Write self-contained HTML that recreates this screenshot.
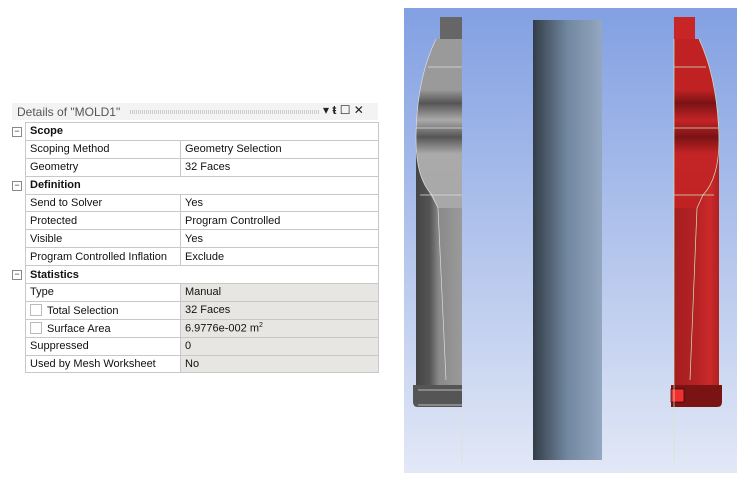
<!DOCTYPE html>
<html><head><meta charset="utf-8"><style>
body{margin:0;width:744px;height:481px;background:#fff;position:relative;overflow:hidden;font-family:"Liberation Sans",sans-serif;}
.hdr{position:absolute;left:12px;top:103px;width:366px;height:17px;background:#f3f3f3;font-size:12px;color:#555;}
.hdr span{position:absolute;left:5px;top:2px;}
.dots{position:absolute;left:118px;top:7px;width:190px;height:4px;background:repeating-linear-gradient(90deg,#ccc 0 1px,transparent 1px 2px);}
table{position:absolute;left:25px;top:122px;border-collapse:collapse;font-size:11px;}
td{border:1px solid #c8c8c8;height:16.9px;padding:0 0 0 4px;white-space:nowrap;color:#111;}
td.l{width:150px}td.r{width:193px}
tr.g td{font-weight:bold}
td.s{background:#e8e6e2}
.box{display:inline-block;width:10px;height:10px;border:1px solid #bbb;vertical-align:-2px;margin-right:5px;background:#fff}
.mn{position:absolute;left:12px;width:8px;height:8px;border:1px solid #888;font-size:9px;line-height:7px;text-align:center;color:#333}
</style></head><body>
<div class="hdr"><span>Details of "MOLD1"</span><div class="dots"></div>
<span style="left:311px;top:0px;font-size:12px;color:#222">▾ <b>ŧ</b> ☐ ✕</span></div>
<div class="mn" style="top:127px">−</div>
<div class="mn" style="top:181px">−</div>
<div class="mn" style="top:270px">−</div>
<table>
<tr class="g"><td colspan="2">Scope</td></tr>
<tr><td class="l">Scoping Method</td><td class="r">Geometry Selection</td></tr>
<tr><td class="l">Geometry</td><td class="r">32 Faces</td></tr>
<tr class="g"><td colspan="2">Definition</td></tr>
<tr><td class="l">Send to Solver</td><td class="r">Yes</td></tr>
<tr><td class="l">Protected</td><td class="r">Program Controlled</td></tr>
<tr><td class="l">Visible</td><td class="r">Yes</td></tr>
<tr><td class="l">Program Controlled Inflation</td><td class="r">Exclude</td></tr>
<tr class="g"><td colspan="2">Statistics</td></tr>
<tr><td class="l">Type</td><td class="r s">Manual</td></tr>
<tr><td class="l"><span class="box"></span>Total Selection</td><td class="r s">32 Faces</td></tr>
<tr><td class="l"><span class="box"></span>Surface Area</td><td class="r s">6.9776e-002 m<sup style="font-size:7px">2</sup></td></tr>
<tr><td class="l">Suppressed</td><td class="r s">0</td></tr>
<tr><td class="l">Used by Mesh Worksheet</td><td class="r s">No</td></tr>
</table>
<svg style="position:absolute;left:0;top:0" width="744" height="481">
<defs>
<linearGradient id="bg" x1="0" y1="0" x2="0" y2="1"><stop offset="0" stop-color="#82a0e2"/><stop offset="1" stop-color="#e2e8f6"/></linearGradient>
<linearGradient id="cy" x1="0" x2="1"><stop offset="0" stop-color="#333d47"/><stop offset="0.5" stop-color="#7288a0"/><stop offset="1" stop-color="#93a7c0"/></linearGradient>
<linearGradient id="gb" x1="0" x2="1"><stop offset="0" stop-color="#444"/><stop offset="0.3" stop-color="#555"/><stop offset="0.5" stop-color="#8a8a8a"/><stop offset="1" stop-color="#9a9a9a"/></linearGradient>
<linearGradient id="rb" x1="0" x2="1"><stop offset="0" stop-color="#a51e20"/><stop offset="0.5" stop-color="#b52224"/><stop offset="0.8" stop-color="#cc2a2a"/><stop offset="1" stop-color="#b02022"/></linearGradient>
<linearGradient id="gs" x1="0" y1="0" x2="0" y2="1"><stop offset="0" stop-color="#9a9a9a"/><stop offset="0.3" stop-color="#9a9a9a"/><stop offset="0.38" stop-color="#555"/><stop offset="0.48" stop-color="#aaa"/><stop offset="0.58" stop-color="#555"/><stop offset="0.68" stop-color="#aaa"/><stop offset="1" stop-color="#a8a8a8"/></linearGradient>
<linearGradient id="rs" x1="0" y1="0" x2="0" y2="1"><stop offset="0" stop-color="#c02224"/><stop offset="0.3" stop-color="#c02224"/><stop offset="0.38" stop-color="#7a1214"/><stop offset="0.48" stop-color="#c42426"/><stop offset="0.58" stop-color="#7a1214"/><stop offset="0.68" stop-color="#c42426"/><stop offset="1" stop-color="#c02224"/></linearGradient>
</defs>
<rect x="404" y="8" width="333" height="465" fill="url(#bg)"/>
<rect x="533" y="20" width="69" height="440" fill="url(#cy)"/>
<!-- gray bottle -->
<rect x="440" y="17" width="22" height="22" fill="#666"/>
<path d="M436 39 H462 V385 H416 V140 Q416 80 436 39Z" fill="url(#gb)"/>
<path d="M436 39 H462 V208 H438 Q433 200 428 190 Q416 175 416 140 Q416 80 436 39Z" fill="url(#gs)"/>
<path d="M413 385 H462 V407 H418 Q413 407 413 402Z" fill="#555"/>
<path d="M438 208 L446 380 M416 128 H462 M428 67 H462 M420 195 H462 M418 390 H462 M418 405 H462 M462 407 V463 M436 39 Q416 80 416 140 Q416 178 432 195 L438 208" stroke="#ddd" stroke-width="0.7" fill="none"/>
<!-- red bottle -->
<rect x="674" y="17" width="21" height="22" fill="#c82626"/>
<path d="M674 39 H699 Q718 80 719 140 V385 H674Z" fill="url(#rb)"/>
<path d="M674 39 H699 Q718 80 719 140 Q719 178 703 195 L697 208 H674Z" fill="url(#rs)"/>
<path d="M671 385 H722 V402 Q722 407 717 407 H671Z" fill="#7a1414"/>
<rect x="671" y="389" width="13" height="13" fill="#f03030" stroke="#300" stroke-width="0.7"/>
<path d="M697 208 L690 380 M674 128 H718 M674 67 H706 M674 195 H714 M674 39 V463 M699 39 Q718 80 719 140 Q719 178 703 195 L697 208" stroke="#cde8c0" stroke-width="0.7" fill="none"/>
</svg>
</body></html>
